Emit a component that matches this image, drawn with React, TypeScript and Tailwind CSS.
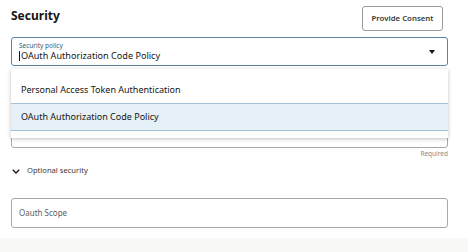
import React from 'react';

const options = ['Personal Access Token Authentication', 'OAuth Authorization Code Policy'];

export default function App() {
  const selected = options[1];

  return (
    <div
      className="relative w-[468px] h-[252px] overflow-hidden bg-white text-[#161513]"
      style={{ fontFamily: '"Noto Sans", "Open Sans", sans-serif' }}
    >
      <div className="pl-[11px] pr-[20px]">
        <div className="flex items-start justify-between pt-[6px]">
          <h2 className="pt-[2px] text-[12px] font-bold leading-[16px]">Security</h2>
          <button className="mr-[5px] h-[25px] w-[81px] rounded-[3px] border border-[#9b9a98] bg-white text-[7.8px] font-semibold text-[#3a3937]">
            Provide Consent
          </button>
        </div>

        {/* security policy select */}
        <div className="mt-[6px] flex h-[29px] items-center rounded-[3px] border-[1.5px] border-[#5d83a3] pl-[7px] pr-[12px]">
          <div className="flex flex-1 flex-col">
            <span className="text-[6.5px] leading-[8px] text-[#3c5a74]">Security policy</span>
            <div className="flex items-center">
              <span className="mr-[1px] h-[10px] w-px bg-[#161513]" />
              <span className="text-[9.1px] leading-[12px] text-[#161513]">{selected}</span>
            </div>
          </div>
          <svg width="6" height="4" viewBox="0 0 6 4" className="mt-[1px]">
            <path d="M0 0 H6 L3 4 Z" fill="#161513" />
          </svg>
        </div>

        {/* field underneath the open list */}
        <div className="mt-[52px] h-[30px] rounded-[3px] border border-[#a9a8a6]" />
        <div className="mt-[1px] text-right text-[6.5px] leading-[10px] text-[#8a8a8a]">Required</div>

        <div className="mt-[6px] flex h-[12px] items-center gap-[7px] pl-[1px]">
          <svg width="8" height="5" viewBox="0 0 8 5">
            <path d="M0.8 0.8 L4 4 L7.2 0.8" fill="none" stroke="#161513" strokeWidth="1.3" />
          </svg>
          <span className="text-[7.6px] text-[#3a3937]">Optional security</span>
        </div>

        <div className="mt-[21px] flex h-[30px] items-center rounded-[3px] border border-[#a9a8a6] pl-[7px]">
          <span className="text-[8px] text-[#5e5d5b]">Oauth Scope</span>
        </div>
      </div>

      <div className="mt-[10px] h-[20px] bg-[#f8f8f7]" />

      {/* open list */}
      <div className="absolute left-[11px] top-[69px] h-[69px] w-[437px] bg-white pt-[8px] shadow-[0_1px_4px_rgba(0,0,0,0.25)]">
        {options.map((o, i) => (
          <div
            key={o}
            className={
              i === 1
                ? 'flex h-[28px] items-center border-y-[1.5px] border-[#a3c0d6] bg-[#e5f0f7] pl-[10px] text-[9px]'
                : 'flex h-[26px] items-center pl-[10px] text-[9px]'
            }
          >
            {o}
          </div>
        ))}
      </div>
    </div>
  );
}
